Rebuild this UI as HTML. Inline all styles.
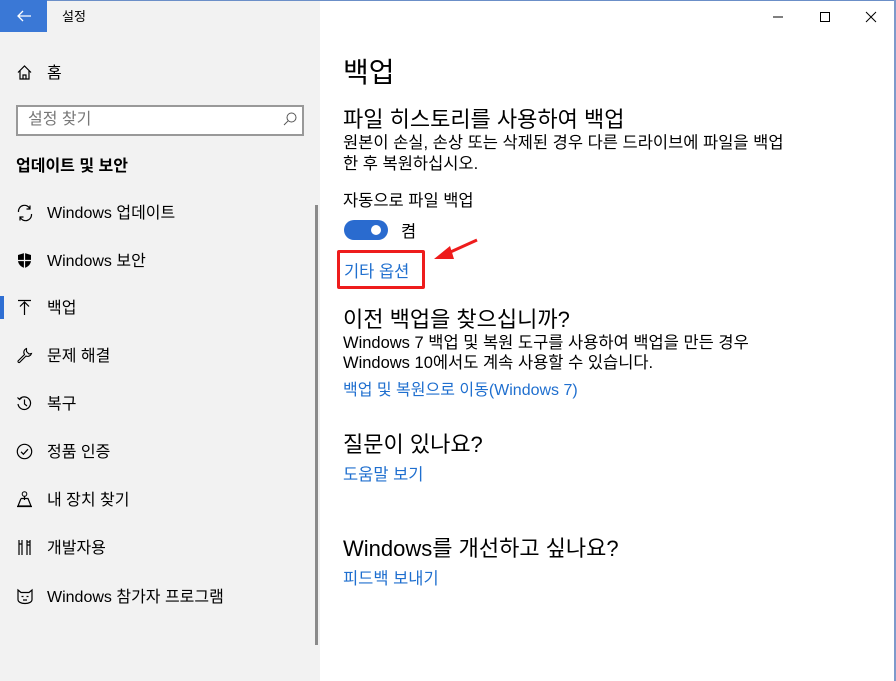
<!DOCTYPE html>
<html><head><meta charset="utf-8"><style>
*{margin:0;padding:0;box-sizing:border-box}
body{width:896px;height:681px;overflow:hidden;background:#fff;font-family:"Liberation Sans","Noto Sans CJK KR",sans-serif;color:#000;position:relative}
.a{position:absolute;white-space:nowrap;line-height:1}
.t{position:absolute;white-space:nowrap;line-height:1;margin-top:2px}
#side{position:absolute;left:0;top:0;width:320px;height:681px;background:#f2f2f2}
.it{font-size:16px}
.ic{position:absolute;left:16px}
.link{color:#1f6fcf;font-size:16px}
.h2{font-size:22px}
.b{font-size:16.5px}
</style></head><body>
<div id="side"></div>
<div class="a" style="left:0;top:0;width:896px;height:1px;background:#6b8fc8"></div>
<div class="a" style="left:894px;top:0;width:2px;height:681px;background:#7e9acb"></div>
<div class="a" style="left:0;top:0;width:47px;height:32px;background:#3a78d6"></div>
<svg class="a" style="left:16px;top:9px" width="16" height="14"><path d="M2 7H15M7 2L2 7L7 12" stroke="#fff" stroke-width="1.3" fill="none"/></svg>
<div class="a" style="left:62px;top:10px;font-size:13px">설정</div>
<svg class="a" style="left:770px;top:10px" width="120" height="14"><path d="M3 7H13" stroke="#000"/><path d="M50.5 2.5h9v9h-9z" stroke="#000" fill="none"/><path d="M96 2L106 12M106 2L96 12" stroke="#000"/></svg>

<svg class="ic a" style="top:64px" width="17" height="17"><path d="M2 8.5L8.5 2L15 8.5M4 6.5V15H13V6.5M7 15V11H10V15" stroke="#000" fill="none" stroke-width="1.2"/></svg>
<div class="t it" style="left:47px;top:64px">홈</div>
<div class="a" style="left:16px;top:105px;width:288px;height:31px;border:2px solid #999;background:#fff"></div>
<div class="t" style="left:28px;top:110px;font-size:16px;color:#777">설정 찾기</div>
<svg class="a" style="left:282px;top:111px" width="16" height="16"><circle cx="9.5" cy="6.5" r="4.5" stroke="#555" fill="none"/><path d="M6.3 9.7L2 14" stroke="#555"/></svg>
<div class="t" style="left:16px;top:157px;font-size:16px;font-weight:bold">업데이트 및 보안</div>

<svg class="ic a" style="top:204px" width="18" height="18"><path d="M2.5 8A6 6 0 0 1 14 5M15.5 10A6 6 0 0 1 4 13M14 1.5V5H10.5M4 16.5V13H7.5" stroke="#000" fill="none" stroke-width="1.2"/></svg>
<div class="t it" style="left:47px;top:204px">Windows 업데이트</div>
<svg class="ic a" style="top:252px" width="17" height="17"><path d="M8.5 1L15 3V8.5C15 12 12 15 8.5 16C5 15 2 12 2 8.5V3Z" fill="#000"/><path d="M8.5 1V16M2 8.5H15" stroke="#f2f2f2" stroke-width="1.2"/></svg>
<div class="t it" style="left:47px;top:252px">Windows 보안</div>
<div class="a" style="left:0;top:296px;width:4px;height:23px;background:#2f6fd3"></div>
<svg class="ic a" style="top:299px" width="17" height="17"><path d="M2 1.5H15M8.5 3V16M4 7.5L8.5 3L13 7.5" stroke="#000" fill="none" stroke-width="1.2"/></svg>
<div class="t it" style="left:47px;top:299px">백업</div>
<svg class="ic a" style="top:347px" width="17" height="17"><path d="M10.5 1.5A4 4 0 0 0 8.5 7.5L2 14A1.2 1.2 0 0 0 3.5 15.5L10 9A4 4 0 0 0 15.5 6.5L13 7L10.5 4.5Z" stroke="#000" fill="none" stroke-width="1.1"/></svg>
<div class="t it" style="left:47px;top:347px">문제 해결</div>
<svg class="ic a" style="top:395px" width="17" height="17"><path d="M3.5 4A6.3 6.3 0 1 1 2 9M1.5 2.5L3.5 4.5L5.5 3M8.5 4.5V9L11 11" stroke="#000" fill="none" stroke-width="1.2"/></svg>
<div class="t it" style="left:47px;top:395px">복구</div>
<svg class="ic a" style="top:443px" width="17" height="17"><circle cx="8.5" cy="8.5" r="7.2" stroke="#000" fill="none" stroke-width="1.2"/><path d="M5 8.8L7.4 11.2L12 6.2" stroke="#000" fill="none" stroke-width="1.2"/></svg>
<div class="t it" style="left:47px;top:443px">정품 인증</div>
<svg class="ic a" style="top:491px" width="17" height="17"><circle cx="8.5" cy="3" r="2.3" stroke="#000" fill="none"/><path d="M8.5 5.3V9M5 7.5H12L15 15H2L5 7.5M1 15.5H16" stroke="#000" fill="none" stroke-width="1.2"/></svg>
<div class="t it" style="left:47px;top:491px">내 장치 찾기</div>
<svg class="ic a" style="top:539px" width="17" height="17"><path d="M3 1V16M6 1V16M3 5H6M11 1V16M14 1V16M11 6H14M11 3H14" stroke="#000" fill="none" stroke-width="1.2"/></svg>
<div class="t it" style="left:47px;top:539px">개발자용</div>
<svg class="ic a" style="top:588px" width="18" height="17"><path d="M2 2L5 4.5H13L16 2V11.5C16 14 13 15.5 9 15.5C5 15.5 2 14 2 11.5Z M5.5 8.5H7.5M10.5 8.5H12.5M7 12H11" stroke="#000" fill="none" stroke-width="1.2"/></svg>
<div class="t it" style="left:47px;top:588px">Windows 참가자 프로그램</div>
<div class="a" style="left:315px;top:205px;width:3px;height:440px;background:#8a8a8a"></div>

<div class="t" style="left:343px;top:57px;font-size:28px">백업</div>
<div class="t h2" style="left:343px;top:107px">파일 히스토리를 사용하여 백업</div>
<div class="t b" style="left:343px;top:133px">원본이 손실, 손상 또는 삭제된 경우 다른 드라이브에 파일을 백업</div>
<div class="t b" style="left:343px;top:154px">한 후 복원하십시오.</div>
<div class="t b" style="left:343px;top:191px">자동으로 파일 백업</div>
<div class="a" style="left:344px;top:220px;width:44px;height:20px;border-radius:10px;background:#2a6bcf"></div>
<div class="a" style="left:371px;top:225px;width:10px;height:10px;border-radius:5px;background:#fff"></div>
<div class="t b" style="left:401px;top:222px">켬</div>
<div class="a" style="left:337px;top:250px;width:88px;height:39px;border:3px solid #ee1c1c;border-radius:2px"></div>
<div class="t link" style="left:344px;top:262px;font-size:16.5px">기타 옵션</div>
<svg class="a" style="left:430px;top:235px" width="52" height="30"><path d="M47 5L16 19" stroke="#ee1c1c" stroke-width="3"/><path d="M4 24L20 11L24 24Z" fill="#ee1c1c"/></svg>
<div class="t h2" style="left:343px;top:307px">이전 백업을 찾으십니까?</div>
<div class="t b" style="left:343px;top:333px">Windows 7 백업 및 복원 도구를 사용하여 백업을 만든 경우</div>
<div class="t b" style="left:343px;top:353px">Windows 10에서도 계속 사용할 수 있습니다.</div>
<div class="t link" style="left:343px;top:381px">백업 및 복원으로 이동(Windows 7)</div>
<div class="t h2" style="left:343px;top:432px">질문이 있나요?</div>
<div class="t link" style="left:343px;top:465px;font-size:16.5px">도움말 보기</div>
<div class="t h2" style="left:343px;top:536px">Windows를 개선하고 싶나요?</div>
<div class="t link" style="left:343px;top:569px;font-size:16.5px">피드백 보내기</div>
</body></html>
